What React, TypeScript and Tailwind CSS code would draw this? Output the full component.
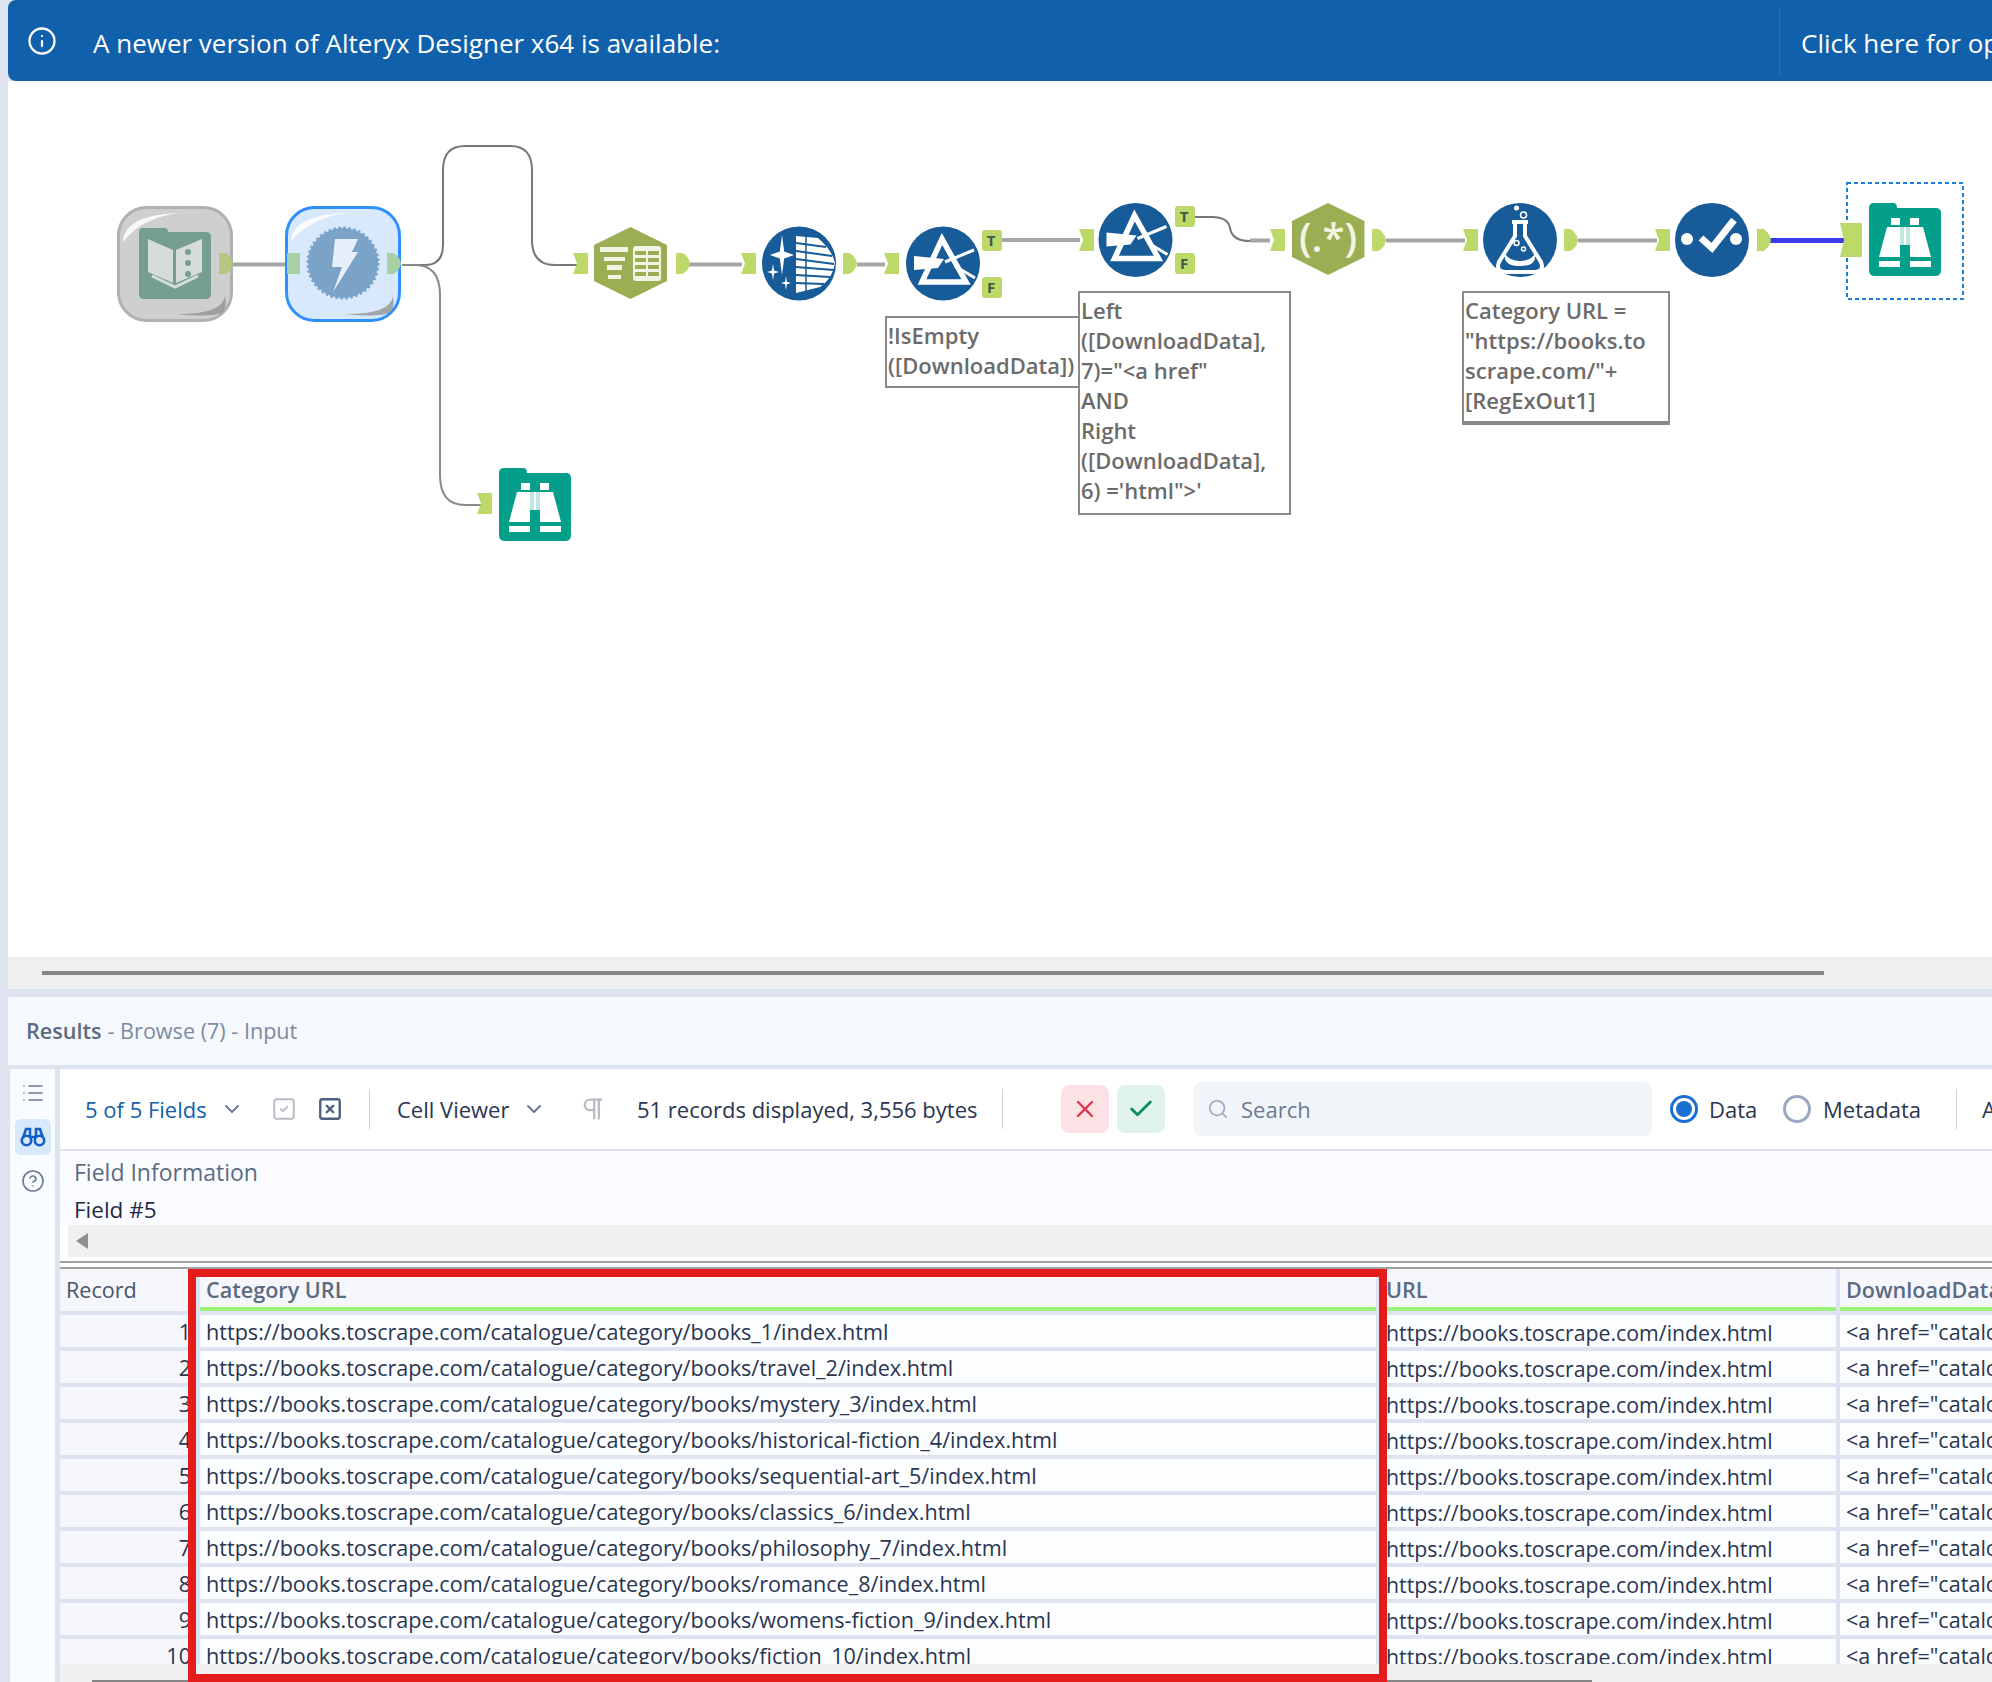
import { Check, ChevronDown, CircleHelp, Info, List, Pilcrow, Search, SquareCheck, SquareX, X } from "lucide-react";

const CATEGORY_PATHS = [
  "books_1",
  "books/travel_2",
  "books/mystery_3",
  "books/historical-fiction_4",
  "books/sequential-art_5",
  "books/classics_6",
  "books/philosophy_7",
  "books/romance_8",
  "books/womens-fiction_9",
  "books/fiction_10",
];

const ANCHOR = "#bcd96a";

function InAnchor({ x, y = 253, w = 15, h = 21, fill = ANCHOR }: { x: number; y?: number; w?: number; h?: number; fill?: string }) {
  return <polygon points={`${x},${y} ${x + w},${y} ${x + w},${y + h} ${x},${y + h} ${x + 4},${y + h / 2}`} fill={fill} />;
}

function OutAnchor({ x, y = 253, w = 14, h = 21, fill = ANCHOR }: { x: number; y?: number; w?: number; h?: number; fill?: string }) {
  return <path d={`M${x} ${y}h${w * 0.45}q${w * 0.45} ${h * 0.15} ${w * 0.55} ${h / 2}q-${w * 0.1} ${h * 0.35} -${w * 0.55} ${h / 2}h-${w * 0.45}z`} fill={fill} />;
}

function FlagAnchor({ x, y, label }: { x: number; y: number; label: string }) {
  return (
    <g>
      <rect x={x} y={y} width={20} height={21} rx={3} fill={ANCHOR} />
      <text x={x + 9} y={y + 16} textAnchor="middle" fontSize={15} fontWeight={700} fill="#3f5a45" fontFamily="Open Sans, sans-serif">
        {label}
      </text>
    </g>
  );
}

function ToolShell({ x, fill, stroke }: { x: number; fill: string; stroke: string }) {
  return (
    <g transform={`translate(${x} 206)`}>
      <rect x={1.5} y={1.5} width={113} height={113} rx={28} fill={fill} stroke={stroke} strokeWidth={3} />
      <path d="M6 36Q7 9 62 7Q24 12 6 36z" fill="#fff" opacity={0.85} />
      <path d="M108 90Q106 108 60 108Q96 112 106 106Q110 100 108 90z" fill="#8f8f8f" opacity={0.75} />
    </g>
  );
}

function BrowseIcon({ x, y }: { x: number; y: number }) {
  return (
    <g transform={`translate(${x} ${y})`}>
      <path d="M5 0H24Q28 0 28 5H67Q72 5 72 10V67Q72 73 66 73H6Q0 73 0 67V5Q0 0 5 0z" fill="#049f8b" />
      <rect x={22} y={15} width={9} height={7} fill="#fff" />
      <rect x={41} y={15} width={9} height={7} fill="#fff" />
      <polygon points="18,24 31,24 31,54 10,54" fill="#fff" />
      <polygon points="41,24 54,24 62,54 41,54" fill="#fff" />
      <rect x={31} y={24} width={10} height={18} fill="#bfe6e0" />
      <rect x={35} y={24} width={2} height={18} fill="#fff" />
      <rect x={10} y={58} width={21} height={6} fill="#fff" />
      <rect x={41} y={58} width={21} height={6} fill="#fff" />
    </g>
  );
}

function Star({ cx, cy, rx, ry }: { cx: number; cy: number; rx: number; ry: number }) {
  const a = rx * 0.18;
  const b = ry * 0.18;
  return (
    <polygon
      points={`${cx},${cy - ry} ${cx + a},${cy - b} ${cx + rx},${cy} ${cx + a},${cy + b} ${cx},${cy + ry} ${cx - a},${cy + b} ${cx - rx},${cy} ${cx - a},${cy - b}`}
      fill="#fff"
    />
  );
}

function FilterGlyph({ dx, dy }: { dx: number; dy: number }) {
  return (
    <g transform={`translate(${dx} ${dy})`} fill="none" stroke="#fff">
      <path d="M942 239L922 282H966z" strokeWidth={5.5} />
      <polygon points="914,256 944,259 938,268 914,270" fill="#fff" stroke="none" />
      <path d="M945 262L974 250" strokeWidth={3} />
      <path d="M955 266L975 278" strokeWidth={3} />
      <path d="M932 274H950" strokeWidth={4} stroke="#175c99" />
    </g>
  );
}

function Workflow() {
  return (
    <svg className="absolute inset-0 h-full w-full" viewBox="8 81 1984 876">
      {/* wires */}
      <g fill="none" stroke="#a6a6a6" strokeWidth={4}>
        <path d="M233 264.5H287" />
        <path d="M689 264.5H742" />
        <path d="M857 264.5H885" />
        <path d="M998 240H1080" />
        <path d="M1386 240.5H1465" />
        <path d="M1578 240.5H1657" />
        <path d="M1250 240.5H1270" />
      </g>
      <path d="M402 265H425Q443 265 443 245V170Q443 146 465 146H510Q532 146 532 170V240Q532 265 555 265H577" fill="none" stroke="#787878" strokeWidth={2} />
      <path d="M402 265H415Q440 265 440 295V475Q440 505 465 505H481" fill="none" stroke="#8a8a8a" strokeWidth={2} />
      <path d="M1194 217H1212Q1228 217 1230 228Q1232 241 1250 241" fill="none" stroke="#787878" strokeWidth={2} />
      <path d="M1770 240.5H1846" fill="none" stroke="#3a3ae8" strokeWidth={5} />

      {/* input tool */}
      <ToolShell x={117} fill="#cfcfcf" stroke="#b0b0b0" />
      <path d="M143 228H164Q168 228 168 232H206Q211 232 211 237V294Q211 299 206 299H144Q139 299 139 294V232Q139 228 143 228z" fill="#769d92" />
      <polygon points="148,239 173,250 173,283 148,272" fill="#d6ddd9" />
      <polygon points="176,250 202,239 202,272 176,283" fill="#d6ddd9" />
      <circle cx={188} cy={252} r={3} fill="#769d92" />
      <circle cx={188} cy={263} r={3} fill="#769d92" />
      <circle cx={188} cy={274} r={3} fill="#769d92" />
      <path d="M152 276L175 287L198 276" fill="none" stroke="#d6ddd9" strokeWidth={3} />
      <OutAnchor x={219} fill="#b4c67f" />

      {/* download tool */}
      <ToolShell x={285} fill="#d9e9fd" stroke="#2f8fff" />
      <circle cx={343} cy={263} r={35} fill="#7aa3c7" stroke="#7aa3c7" strokeWidth={3} strokeDasharray="2.5 2.5" />
      <polygon points="335,239 358,239 352,252 358,252 333,292 342,267 332,267" fill="#e6f0fb" />
      <rect x={287} y={253} width={13} height={21} fill="#a7d0a5" />
      <OutAnchor x={387} fill="#a7d0a5" />

      {/* text to columns */}
      <InAnchor x={573} />
      <polygon points="630.5,227 667,245 667,281 630.5,299 594,281 594,245" fill="#9cae53" />
      <rect x={600} y={247} width={28} height={5} fill="#f3f5e4" />
      <rect x={604} y={257} width={21} height={4} fill="#f3f5e4" />
      <rect x={607} y={265} width={15} height={5} fill="#f3f5e4" />
      <rect x={608} y={275} width={13} height={4} fill="#f3f5e4" />
      <rect x={633} y={246} width={28} height={35} rx={3} fill="#f3f5e4" />
      {[251, 258, 265, 272].map((y) => (
        <g key={y}>
          <rect x={635} y={y} width={11} height={4} fill="#9cae53" />
          <rect x={648} y={y} width={11} height={4} fill="#9cae53" />
        </g>
      ))}
      <OutAnchor x={676} />

      {/* data cleansing */}
      <InAnchor x={741} />
      <circle cx={799} cy={263.5} r={37} fill="#175c99" />
      <Star cx={782} cy={255} rx={12} ry={20} />
      <Star cx={773} cy={272} rx={6} ry={8} />
      <Star cx={786} cy={283} rx={5} ry={7} />
      <path d="M796 236L818 238Q832 250 835 263Q833 278 820 287L796 293z" fill="#fff" />
      {[
        "M796 243L826 247",
        "M796 251L832 256",
        "M796 259L834 264",
        "M796 267L834 270",
        "M796 275L830 277",
        "M796 283L824 284",
      ].map((d) => (
        <path key={d} d={d} stroke="#175c99" strokeWidth={2} />
      ))}
      <path d="M806 236V292" stroke="#175c99" strokeWidth={1.5} />
      <OutAnchor x={843} />

      {/* filter 1 */}
      <InAnchor x={884} />
      <circle cx={943} cy={263.5} r={37} fill="#175c99" />
      <FilterGlyph dx={0} dy={0} />
      <FlagAnchor x={982} y={230} label="T" />
      <FlagAnchor x={982} y={277} label="F" />

      {/* filter 2 */}
      <InAnchor x={1079} y={229} h={22} />
      <circle cx={1135.5} cy={240} r={37} fill="#175c99" />
      <FilterGlyph dx={192.5} dy={-23.5} />
      <FlagAnchor x={1175} y={206} label="T" />
      <FlagAnchor x={1175} y={253} label="F" />

      {/* regex */}
      <InAnchor x={1270} y={229} h={22} />
      <polygon points="1328,203 1364.5,221 1364.5,257 1328,275 1292,257 1292,221" fill="#9cae53" />
      <text x={1328} y={252} textAnchor="middle" fontSize={40} fontWeight={600} fill="#f3f5e4" fontFamily="Open Sans, sans-serif">
        (.*)
      </text>
      <OutAnchor x={1372} y={229} h={22} />

      {/* formula */}
      <InAnchor x={1463} y={229} h={22} />
      <circle cx={1520} cy={240} r={37} fill="#175c99" />
      <circle cx={1516.5} cy={208} r={2.5} fill="#fff" />
      <circle cx={1523.5} cy={215} r={3} fill="none" stroke="#fff" strokeWidth={1.5} />
      <path d="M1512 222H1528M1515 222V236L1499 262Q1495 272 1507 272H1533Q1545 272 1541 262L1525 236V222" fill="none" stroke="#fff" strokeWidth={4} />
      <path d="M1505 254Q1503 266 1520 266Q1537 266 1535 254Q1530 261 1520 261Q1510 261 1505 254z" fill="#fff" />
      <circle cx={1516.5} cy={243} r={2.5} fill="none" stroke="#fff" strokeWidth={1.5} />
      <circle cx={1523.5} cy={249} r={2} fill="none" stroke="#fff" strokeWidth={1.5} />
      <OutAnchor x={1564} y={229} h={22} />

      {/* select */}
      <InAnchor x={1655} y={229} h={22} />
      <circle cx={1712} cy={240} r={37} fill="#175c99" />
      <circle cx={1687} cy={239} r={6} fill="#fff" />
      <circle cx={1736} cy={239} r={6} fill="#fff" />
      <path d="M1701 238L1712 248L1734 220" fill="none" stroke="#fff" strokeWidth={7} />
      <OutAnchor x={1757} y={229} h={22} />

      {/* browse tools */}
      <InAnchor x={477} y={493} h={21} />
      <BrowseIcon x={499} y={468} />
      <rect x={1847} y={183} width={116} height={116} fill="none" stroke="#1b7fdc" strokeWidth={2} strokeDasharray="4 3" />
      <InAnchor x={1840} y={223} w={22} h={34} />
      <BrowseIcon x={1869} y={203} />
    </svg>
  );
}

function Annotation({ className, lines }: { className: string; lines: string[] }) {
  return (
    <div className={`absolute overflow-hidden whitespace-nowrap border-2 border-[#8a8a8a] bg-white pl-px pt-[2px] text-[22px] font-semibold leading-[30px] text-[#6b6b6b] ${className}`}>
      {lines.map((line) => (
        <div key={line}>{line}</div>
      ))}
    </div>
  );
}

function Divider() {
  return <div className="h-10 w-px shrink-0 bg-[#ccd3df]" />;
}

function Radio({ on }: { on?: boolean }) {
  return (
    <span className={`flex h-7 w-7 shrink-0 items-center justify-center rounded-full border-[3px] ${on ? "border-[#1b6fd0]" : "border-[#9aa8c2]"}`}>
      {on && <span className="h-4 w-4 rounded-full bg-[#1b6fd0]" />}
    </span>
  );
}

function BinocularsGlyph() {
  return (
    <svg className="h-[20px] w-[26px]" viewBox="0 0 26 20" fill="none" stroke="#1160c8" strokeWidth={2.6}>
      <circle cx={6.5} cy={13.5} r={4.7} />
      <circle cx={19.5} cy={13.5} r={4.7} />
      <path d="M10 10H16M3 11L6 2H10V9M23 11L20 2H16V9" />
    </svg>
  );
}

export default function App() {
  return (
    <div className="relative flex h-[1682px] w-[1992px] flex-col overflow-hidden bg-[#dde4f0] pl-2 font-['Open_Sans',sans-serif] text-[21.6px] text-[#2a3550]">
      {/* update banner */}
      <div className="flex h-[81px] shrink-0 items-center rounded-bl-lg rounded-tl-lg bg-[#1160ab] text-[26px] text-white">
        <Info className="ml-[19px] h-[30px] w-[30px] shrink-0" strokeWidth={1.8} />
        <span className="ml-[36px] w-[1686px] shrink-0 whitespace-nowrap pt-[5px]">A newer version of Alteryx Designer x64 is available:</span>
        <div className="h-[68px] w-px shrink-0 bg-[#2a70b4]" />
        <span className="ml-[21px] shrink-0 whitespace-nowrap pt-[5px]">Click here for options</span>
      </div>

      {/* canvas */}
      <div className="relative h-[876px] shrink-0 bg-white">
        <Workflow />
        <Annotation className="left-[877px] top-[235px] h-[72px] w-[200px]" lines={["!IsEmpty", "([DownloadData])"]} />
        <Annotation
          className="left-[1070px] top-[210px] h-[224px] w-[213px]"
          lines={["Left", "([DownloadData],", '7)="<a href"', "AND", "Right", "([DownloadData],", "6) ='html\">'"]}
        />
        <Annotation className="left-[1454px] top-[210px] h-[134px] w-[208px] border-b-4" lines={["Category URL =", '"https://books.to', 'scrape.com/"+', "[RegExOut1]"]} />
      </div>

      <div className="flex h-8 shrink-0 items-center bg-[#f0f0f0] pl-[34px]">
        <div className="h-1 w-[1782px] bg-[#858585]" />
      </div>

      {/* results header */}
      <div className="mt-2 flex h-[68px] shrink-0 items-center bg-[#f5f8fd] pl-[18px] text-[#7d8ba0]">
        <span className="font-semibold text-[#5b6b82]">Results</span>
        <span className="ml-[6px]">- Browse (7) - Input</span>
      </div>

      <div className="mt-1 flex min-h-0 flex-1">
        {/* side rail */}
        <div className="ml-[2px] flex w-[45px] shrink-0 flex-col items-center bg-[#f8fbff] pt-[12px] text-[#6b7a94]">
          <List className="h-6 w-6" strokeWidth={1.6} />
          <div className="mt-[14px] flex h-9 w-9 items-center justify-center rounded-md bg-[#d8e9fb]">
            <BinocularsGlyph />
          </div>
          <CircleHelp className="mt-[14px] h-6 w-6" strokeWidth={1.6} />
        </div>

        <div className="ml-[5px] flex min-w-0 flex-1 flex-col bg-white">
          {/* toolbar */}
          <div className="flex h-20 shrink-0 items-center whitespace-nowrap text-[22px]">
            <span className="ml-[25px] w-[123px] shrink-0 text-[#1160ab]">5 of 5 Fields</span>
            <ChevronDown className="ml-3 h-6 w-6 shrink-0 text-[#6b7a94]" />
            <SquareCheck className="ml-[27px] h-[26px] w-[26px] shrink-0 text-[#b8bcc4]" strokeWidth={1.8} />
            <SquareX className="ml-5 h-[26px] w-[26px] shrink-0 text-[#4e5f80]" strokeWidth={2.2} />
            <div className="ml-[26px]"><Divider /></div>
            <span className="ml-[27px] w-[118px] shrink-0">Cell Viewer</span>
            <ChevronDown className="ml-[7px] h-6 w-6 shrink-0 text-[#6b7a94]" />
            <Pilcrow className="ml-[33px] h-7 w-7 shrink-0 text-[#b8bcc4]" strokeWidth={2} />
            <span className="ml-[30px] w-[341px] shrink-0">51 records displayed, 3,556 bytes</span>
            <div className="ml-6"><Divider /></div>
            <div className="ml-[58px] flex h-12 w-12 shrink-0 items-center justify-center rounded-lg bg-[#fde2e5]">
              <X className="h-7 w-7 text-[#e0324a]" strokeWidth={2} />
            </div>
            <div className="ml-2 flex h-12 w-12 shrink-0 items-center justify-center rounded-lg bg-[#dff3ec]">
              <Check className="h-7 w-7 text-[#0f8a63]" strokeWidth={2.4} />
            </div>
            <div className="ml-[28px] flex h-[54px] w-[459px] shrink-0 items-center rounded-lg bg-[#f1f4f9] text-[#6b7a94]">
              <Search className="ml-[14px] h-[22px] w-[22px] text-[#9aa8c2]" strokeWidth={1.8} />
              <span className="ml-3">Search</span>
            </div>
            <div className="ml-[18px]"><Radio on /></div>
            <span className="ml-[11px] w-[60px] shrink-0">Data</span>
            <div className="ml-[14px]"><Radio /></div>
            <span className="ml-3 w-[110px] shrink-0">Metadata</span>
            <div className="ml-[23px]"><Divider /></div>
            <span className="ml-[25px] shrink-0">A</span>
          </div>

          <div className="h-[2px] shrink-0 bg-[#dde4f0]" />

          {/* field info */}
          <div className="flex h-[74px] shrink-0 flex-col bg-[#fbfcff] pl-[14px]">
            <span className="mt-[7px] text-[23px] leading-[28px] text-[#5b6b82]">Field Information</span>
            <span className="mt-[10px] text-[22.5px] leading-[28px] text-[#1f2a44]">Field #5</span>
          </div>
          <div className="ml-2 flex h-8 shrink-0 items-center bg-[#f0f0f0] pl-[8px]">
            <span className="h-0 w-0 border-y-[8px] border-r-[12px] border-y-transparent border-r-[#8f8f8f]" />
          </div>
          <div className="mt-1 h-[2px] shrink-0 bg-[#a0a0a0]" />
          <div className="mt-1 h-[2px] shrink-0 bg-[#a0a0a0]" />

          {/* data grid */}
          <div className="grid h-[395px] shrink-0 grid-cols-[136px_1176px_456px_152px] grid-rows-[42px] auto-rows-[32px] gap-1 overflow-hidden whitespace-nowrap bg-[#dde3f0]">
            <div className="flex items-center bg-[#f6f7fd] pl-[6px] pt-px text-[#4a5568]">Record</div>
            <div className="flex items-center border-b-4 border-[#9cf27a] bg-[#f6f7fd] pl-[6px] pt-[4px] font-semibold text-[#5b6b82]">Category URL</div>
            <div className="flex items-center border-b-4 border-[#9cf27a] bg-[#f6f7fd] pl-[6px] pt-[4px] font-semibold text-[#5b6b82]">URL</div>
            <div className="flex items-center overflow-hidden border-b-4 border-[#9cf27a] bg-[#f6f7fd] pl-[6px] pt-[4px] font-semibold text-[#5b6b82]">DownloadData</div>
            {CATEGORY_PATHS.map((path, i) => (
              <div key={path} className="contents">
                <div className="flex items-center justify-end bg-[#f6f7fd] pr-[5px] pt-[3px]">{i + 1}</div>
                <div className="flex items-center bg-[#fcfdff] pl-[6px] pt-[3px]">https://books.toscrape.com/catalogue/category/{path}/index.html</div>
                <div className="flex items-center bg-[#fcfdff] pl-[6px] pt-[3px] text-[21.3px]">https://books.toscrape.com/index.html</div>
                <div className="flex items-center overflow-hidden bg-[#fcfdff] pl-[6px] pt-[3px]">{'<a href="catalogue/category/' + path + '/index.html">'}</div>
              </div>
            ))}
          </div>

          <div className="flex h-[18px] shrink-0 items-end bg-[#f0f0f0] pl-[32px]">
            <div className="h-[2px] w-[1500px] bg-[#858585]" />
          </div>
        </div>
      </div>

      {/* red highlight drawn over the grid */}
      <div className="absolute left-[188px] top-[1269px] h-[413px] w-[1199px] border-8 border-[#e51c1c]" />
    </div>
  );
}
